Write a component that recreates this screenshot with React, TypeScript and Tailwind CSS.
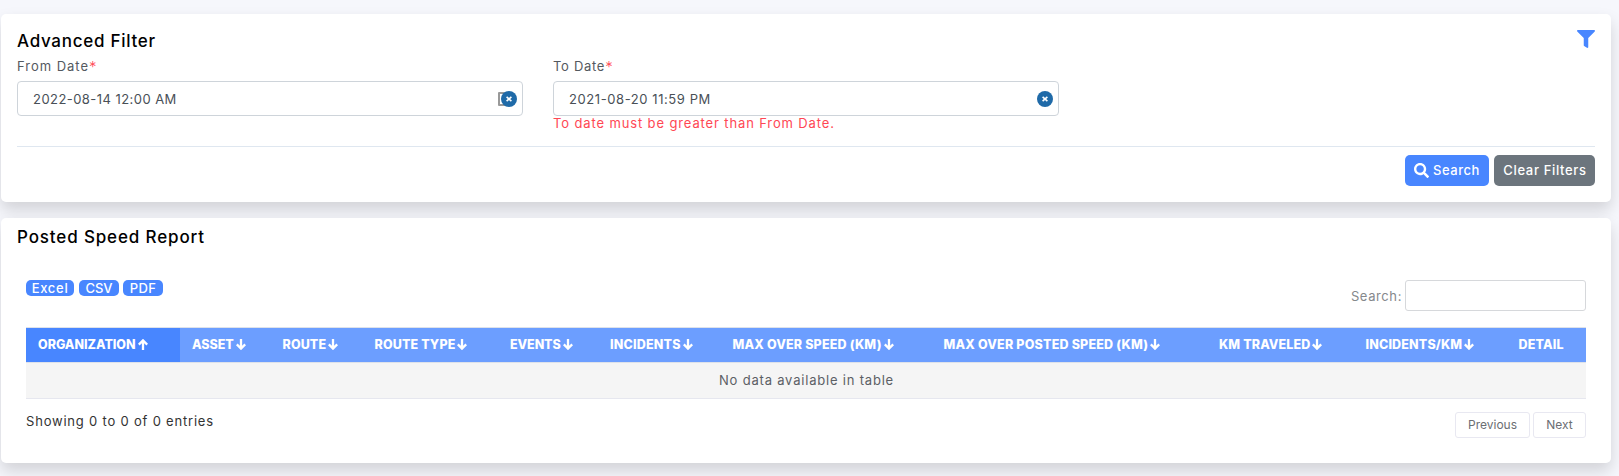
import React from "react";
import { FaFilter, FaSearch } from "react-icons/fa";

type Column = { label: string; width: string; spacing: string };

const columns: Column[] = [
  { label: "ORGANIZATION", width: "w-[154px]", spacing: "tracking-[-0.03px]" },
  { label: "ASSET", width: "w-[90.5px]", spacing: "tracking-[-0.04px]" },
  { label: "ROUTE", width: "w-[92px]", spacing: "tracking-[0.1px]" },
  { label: "ROUTE TYPE", width: "w-[135.5px]", spacing: "tracking-[0.14px]" },
  { label: "EVENTS", width: "w-[100px]", spacing: "tracking-[-0.08px]" },
  { label: "INCIDENTS", width: "w-[122.5px]", spacing: "tracking-[0.18px]" },
  { label: "MAX OVER SPEED (KM)", width: "w-[211px]", spacing: "tracking-[0.18px]" },
  { label: "MAX OVER POSTED SPEED (KM)", width: "w-[275.5px]", spacing: "tracking-[0.2px]" },
  { label: "KM TRAVELED", width: "w-[146.5px]", spacing: "tracking-[0.13px]" },
  { label: "INCIDENTS/KM", width: "w-[153px]", spacing: "tracking-[0.15px]" },
  { label: "DETAIL", width: "w-[79.5px]", spacing: "tracking-[0.15px]" },
];

function SortArrow({ up }: { up?: boolean }) {
  return (
    <svg viewBox="0 0 10 11" className={`-mt-px ml-[2px] h-[11px] w-[10px] shrink-0 ${up ? "rotate-180" : ""}`}>
      <path d="M5 0V9.4M0.8 5.4L5 9.6L9.2 5.4" fill="none" stroke="#fff" strokeWidth="2.3" />
    </svg>
  );
}

function ClearBadge() {
  return (
    <svg viewBox="0 0 16 16" className="relative size-4">
      <circle cx="8" cy="8" r="8" fill="#1f6aa8" />
      <path d="M5.6 5.8L10.4 10.2M10.4 5.8L5.6 10.2" stroke="#fff" strokeWidth="1.6" />
    </svg>
  );
}

function DateField(props: {
  label: string;
  labelSpacing: string;
  value: string;
  valueSpacing: string;
  picker?: boolean;
  error?: string;
}) {
  return (
    <div className="w-[506px]">
      <div className={`h-5 text-[13px] leading-5 text-[#54595f] ${props.labelSpacing}`}>
        {props.label}
        <span className="inline-block h-5 align-top text-[15px] font-light leading-[22px] text-[#ff4754]">*</span>
      </div>
      <div className="mt-[5px] flex h-[35px] items-center justify-between rounded-[4px] border border-[#ced4da] pl-[15px] pr-[5px]">
        <span className={`text-[13px] leading-5 text-[#495057] ${props.valueSpacing}`}>{props.value}</span>
        <div className="relative flex">
          {props.picker && (
            <span className="absolute -left-[3px] top-px h-[14px] w-[10px] rounded-[1px] border-2 border-[#999]" />
          )}
          <ClearBadge />
        </div>
      </div>
      {props.error && (
        <div className="text-[13px] leading-[14px] tracking-[0.87px] text-[#ff4754]">{props.error}</div>
      )}
    </div>
  );
}

const card = "rounded-[5px] bg-white shadow-[0_8px_16px_rgba(0,0,0,0.15)]";

export default function App() {
  return (
    <div className="h-[476px] overflow-hidden bg-[#f6f7fc] pl-px pr-2 pt-[14px] font-['Inter','Liberation_Sans',sans-serif]">
      <section className={`h-[188px] px-4 pt-[17px] ${card}`}>
        <div className="flex h-5 justify-between">
          <h2 className="text-[17px] font-[450] leading-5 tracking-[0.72px] text-black">Advanced Filter</h2>
          <FaFilter className="-mt-px size-[18px] text-[#4886ff]" />
        </div>
        <div className="mt-[5px] flex h-[91px] gap-[30px] border-b border-[#dfe7f0]">
          <DateField
            label="From Date"
            labelSpacing="tracking-[0.98px]"
            value="2022-08-14 12:00 AM"
            valueSpacing="tracking-[0.45px]"
            picker
          />
          <DateField
            label="To Date"
            labelSpacing="tracking-[0.7px]"
            value="2021-08-20 11:59 PM"
            valueSpacing="tracking-[0.58px]"
            error="To date must be greater than From Date."
          />
        </div>
        <div className="mt-2 flex justify-end gap-[5px] text-[13px] font-[450] leading-5 text-white">
          <button className="flex h-[31px] w-[84px] items-center rounded-[5px] bg-[#4886ff] pl-[9px]">
            <FaSearch className="-mt-px size-[15px]" />
            <span className="-mt-px ml-1 tracking-[0.55px]">Search</span>
          </button>
          <button className="h-[31px] w-[101px] rounded-[5px] bg-[#6c757d] pb-[2px] pl-px tracking-[0.66px]">
            Clear Filters
          </button>
        </div>
      </section>

      <section className={`mt-4 h-[245px] px-4 pt-[9px] ${card}`}>
        <h2 className="text-[17px] font-[450] leading-5 tracking-[0.86px] text-black">Posted Speed Report</h2>
        <div className="px-[9px] pt-[33px]">
          <div className="flex h-[31px] justify-between">
            <div className="flex text-[13px] font-[450] leading-4 text-white">
              <button className="h-4 w-12 rounded-[5px] bg-[#4886ff] tracking-[0.7px]">Excel</button>
              <button className="ml-[5px] h-4 w-10 rounded-[5px] bg-[#4886ff]">CSV</button>
              <button className="ml-1 h-4 w-10 rounded-[5px] bg-[#4886ff] tracking-[0.3px]">PDF</button>
            </div>
            <label className="flex items-center text-[13px] leading-5 text-[#85888c]">
              <span className="tracking-[0.6px]">Search:</span>
              <input className="ml-[3px] h-[31px] w-[181px] rounded-[3px] border border-[#d6d8db] bg-white" />
            </label>
          </div>
          <div className="mt-4 border-t border-[#dee2ea]">
            <div className="flex h-[35px] border-b border-[#dee2ea] bg-[#6c9eff] text-[12.5px] font-extrabold text-white">
              {columns.map((c, i) => (
                <div
                  key={c.label}
                  className={`flex shrink-0 items-center whitespace-nowrap pl-3 ${c.width} ${i === 0 ? "bg-[#4886ff]" : ""}`}
                >
                  <span className={c.spacing}>{c.label}</span>
                  {c.label !== "DETAIL" && <SortArrow up={i === 0} />}
                </div>
              ))}
            </div>
            <div className="flex h-9 items-center justify-center border-b border-[#e6e7ef] bg-[#f5f5f5] pl-px text-[13px] tracking-[0.8px] text-[#5c6065]">
              No data available in table
            </div>
          </div>
          <div className="flex items-start justify-between pt-[13px]">
            <span className="-mt-px text-[13px] leading-5 tracking-[0.8px] text-[#333]">Showing 0 to 0 of 0 entries</span>
            <div className="flex gap-[3px] text-[12px] text-[#6b6e73]">
              <button className="h-[26px] w-[75px] rounded-[3px] border border-[#e8e8f1]">Previous</button>
              <button className="h-[26px] w-[53px] rounded-[3px] border border-[#e8e8f1]">Next</button>
            </div>
          </div>
        </div>
      </section>
    </div>
  );
}
